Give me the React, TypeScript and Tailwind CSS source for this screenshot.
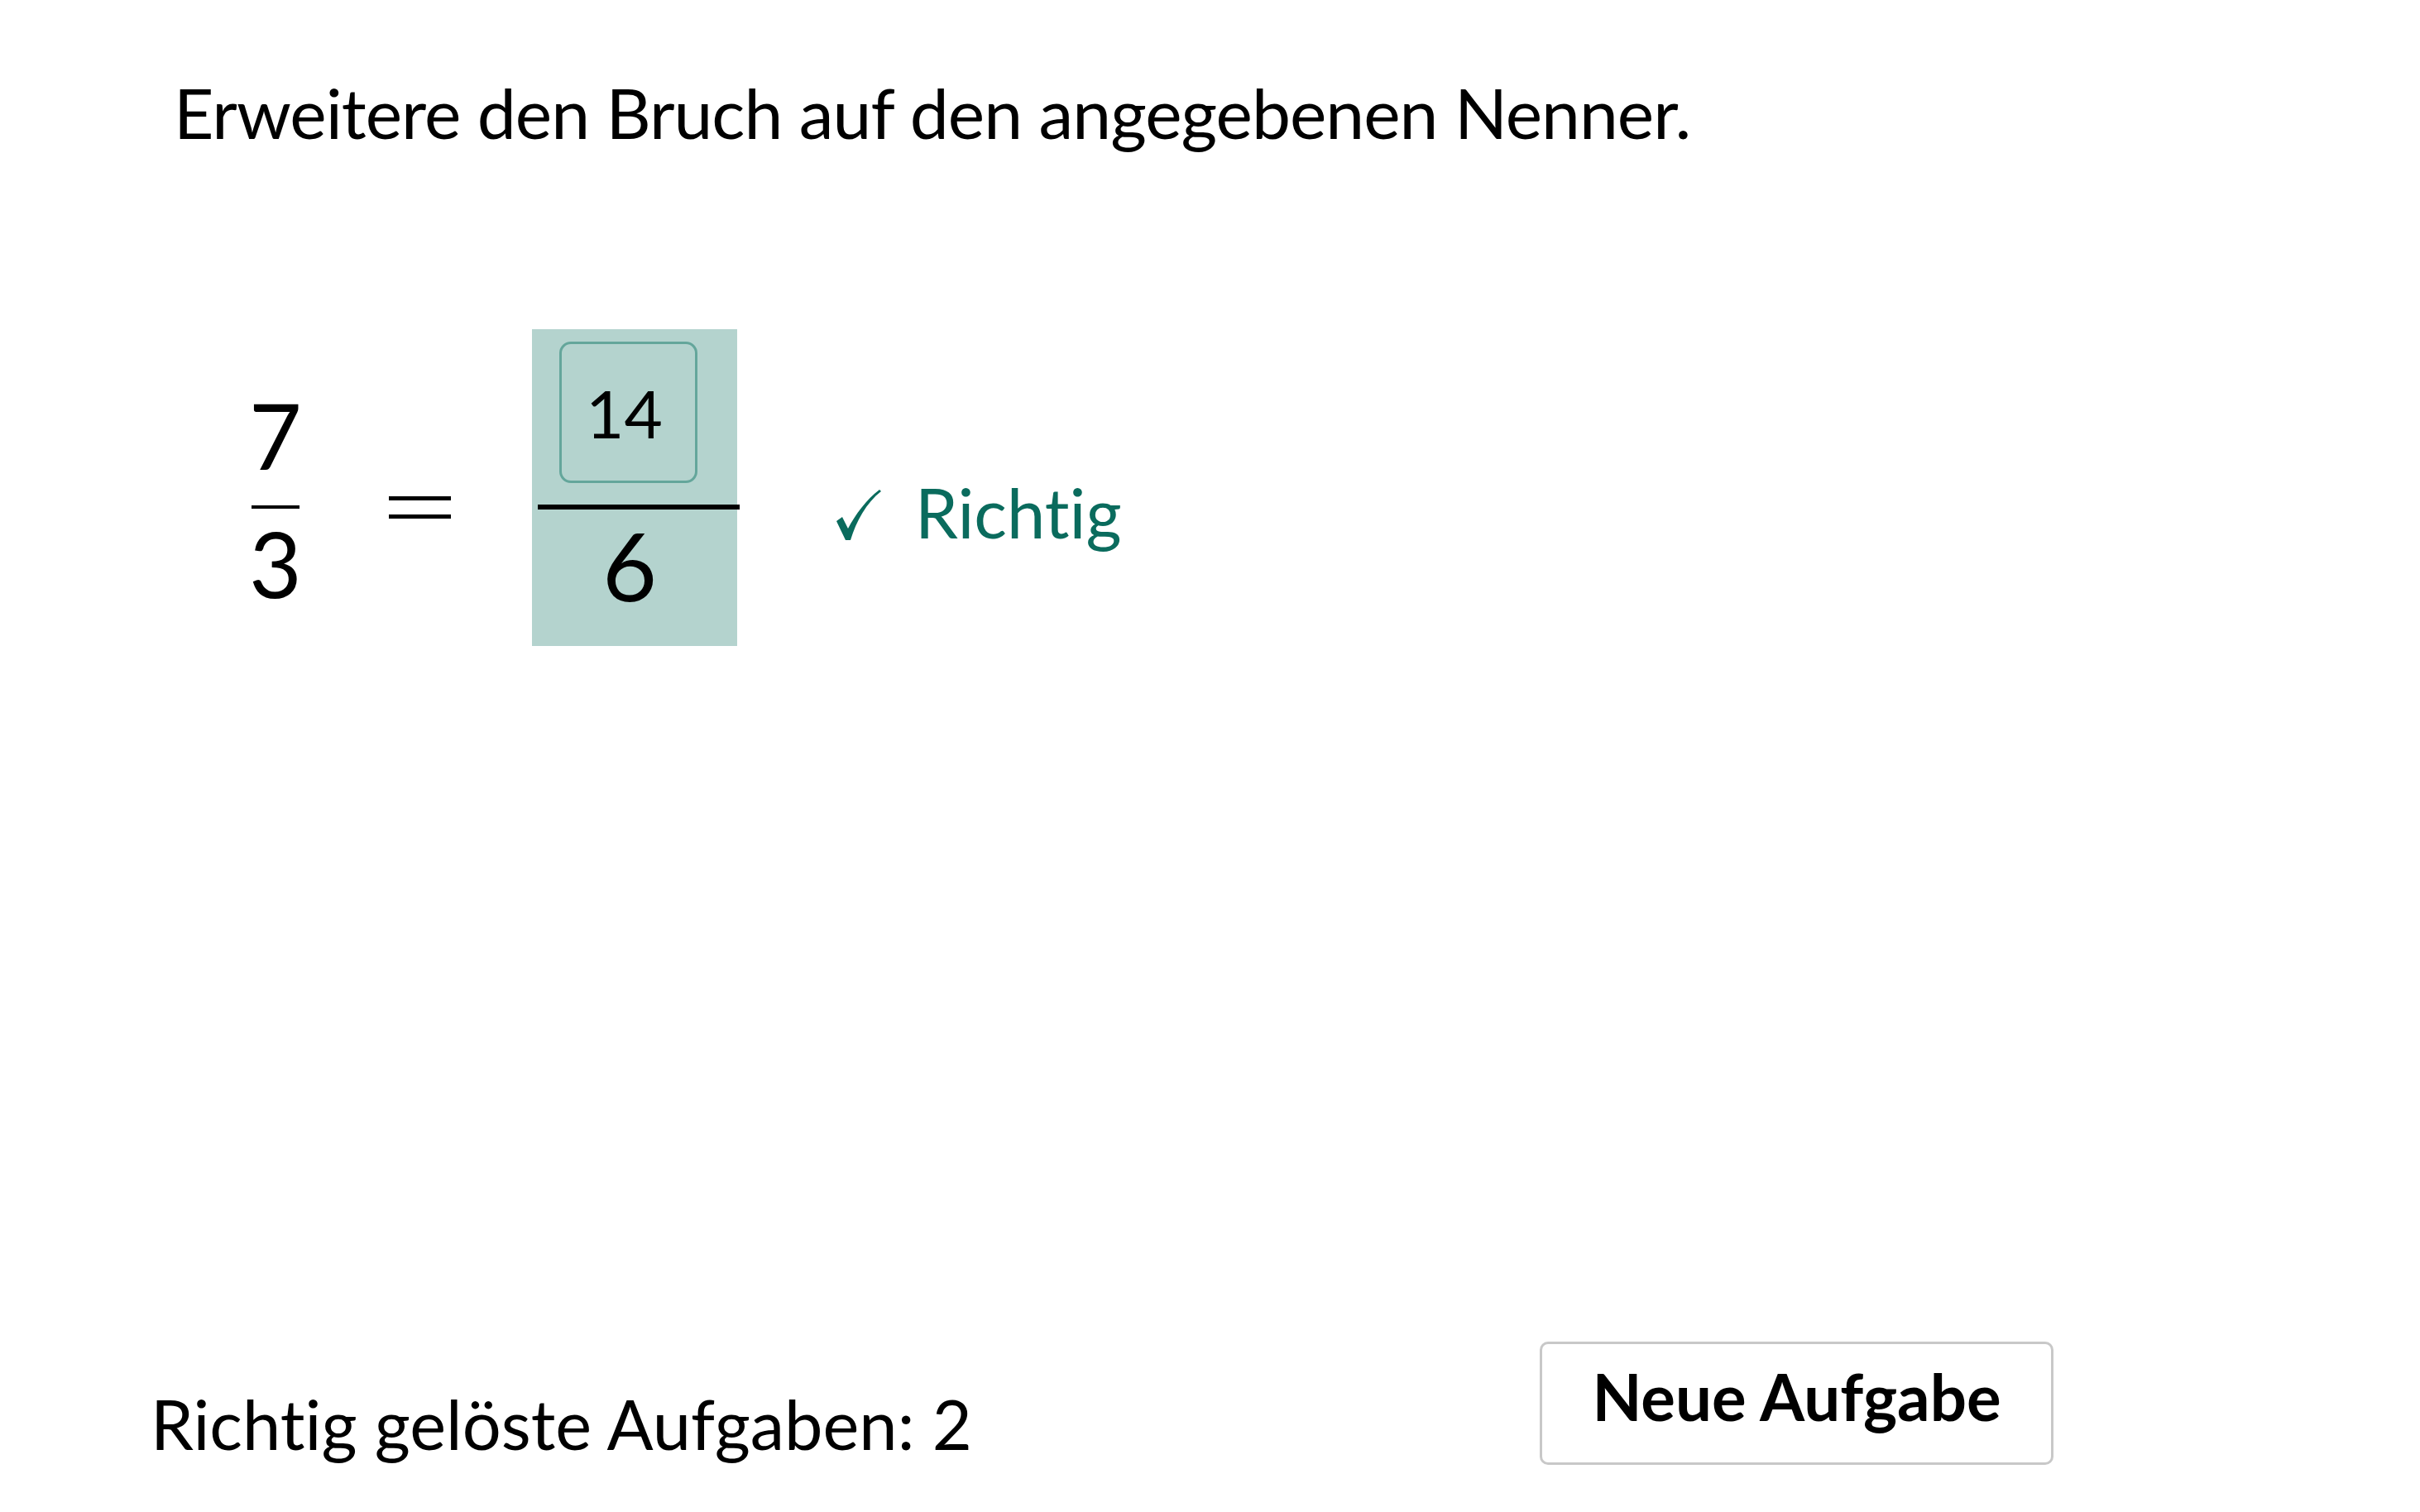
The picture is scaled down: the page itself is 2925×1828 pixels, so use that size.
import { useState } from 'react';

function Checkmark() {
  return (
    <svg width="54" height="61" viewBox="0 0 54 61" className="shrink-0">
      <path
        d="M0 38 L11 61 L17 61 C24 38 36 16 54 2 L52 0 C36 12 23 30 14 47 L7 33 Z"
        fill="#0a6b5d"
      />
    </svg>
  );
}

export default function App() {
  const [answer, setAnswer] = useState('14');
  const solved = 2;

  return (
    <div className="w-[2925px] h-[1828px] bg-white text-black flex flex-col font-['Lato',sans-serif] [font-variant-ligatures:none]">
      {/* Aufgabenstellung */}
      <h1 className="ml-[210px] mt-[94px] text-[84px] tracking-[-1px] leading-none font-normal">
        Erweitere den Bruch auf den angegebenen Nenner.
      </h1>

      {/* Bruch-Zeile */}
      <div className="flex items-start ml-[304px] mt-[220px]">
        <div className="flex flex-col items-center w-[58px] mt-[72px]">
          <span className="text-[110px] leading-none">7</span>
          <div className="mt-[31px] h-[4px] w-[58px] bg-black" />
          <span className="mt-[10px] text-[110px] leading-none">3</span>
        </div>

        <div className="flex flex-col gap-[17px] ml-[108px] mt-[202px]">
          <div className="w-[75px] h-[5px] bg-black" />
          <div className="w-[75px] h-[5px] bg-black" />
        </div>

        <div className="flex flex-col ml-[98px] w-[248px] h-[383px] bg-[#b4d3ce]">
          <input
            value={answer}
            onChange={(e) => setAnswer(e.target.value)}
            className="mt-[15px] ml-[33px] w-[167px] h-[171px] rounded-[14px] border-[3px] border-[#64a69b] bg-transparent pl-[29px] text-[80px] leading-none outline-none font-['Lato',sans-serif]"
          />
          <div className="mt-[26px] ml-[7px] w-[244px] h-[6px] bg-black" />
          <span className="mt-[10px] pr-[12px] text-center text-[114px] leading-none">6</span>
        </div>

        <div className="flex items-start ml-[120px] mt-[180px] text-[#0a6b5d]">
          <div className="mt-[14px]">
            <Checkmark />
          </div>
          <span className="ml-[41px] text-[83px] leading-none">Richtig</span>
        </div>
      </div>

      {/* Fußzeile */}
      <div className="mt-auto mb-[57px] flex items-end pl-[182px]">
        <div className="w-[1679px] shrink-0 mb-[8px] text-[83px] leading-none">
          Richtig gelöste Aufgaben: {solved}
        </div>
        <button className="w-[621px] h-[149px] shrink-0 rounded-[10px] border-[3px] border-[#c8c8c8] bg-white pb-[18px] text-[78px] font-bold leading-none">
          Neue Aufgabe
        </button>
      </div>
    </div>
  );
}
